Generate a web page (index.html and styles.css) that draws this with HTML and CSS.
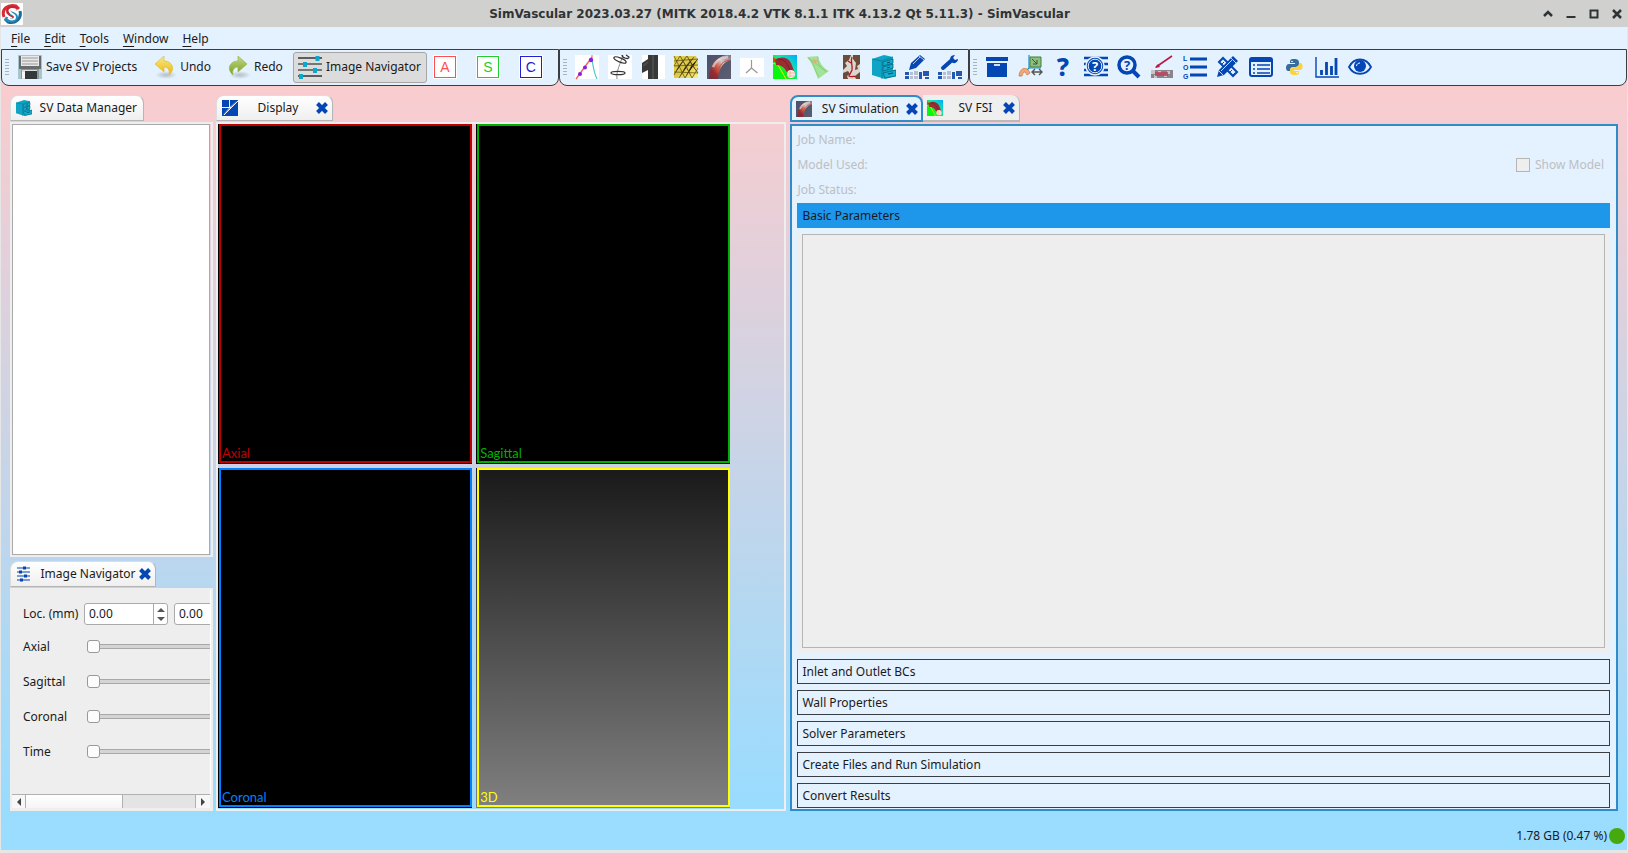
FILE: index.html
```html
<!DOCTYPE html>
<html lang="en">
<head>
<meta charset="utf-8">
<title>SimVascular</title>
<link rel="stylesheet" href="styles.css">
</head>
<body>
<svg class="defs" aria-hidden="true">
  <defs>
    <linearGradient id="gSim" x1="0" y1="0" x2="1" y2="1"><stop offset="0" stop-color="#4c5068"/><stop offset="1" stop-color="#5c5e72"/></linearGradient>
    <linearGradient id="gVessel" x1="1" y1="0" x2="0" y2="1"><stop offset="0" stop-color="#85707c"/><stop offset=".35" stop-color="#d8c4c2"/><stop offset=".55" stop-color="#d0604a"/><stop offset=".75" stop-color="#982a32"/><stop offset="1" stop-color="#6a3040"/></linearGradient>
    <linearGradient id="gFsi" x1="1" y1="0" x2="0" y2="1"><stop offset="0" stop-color="#00a8ff"/><stop offset=".4" stop-color="#10e8b0"/><stop offset=".6" stop-color="#10f020"/><stop offset="1" stop-color="#00ff00"/></linearGradient>
    <linearGradient id="gUndo" x1="0" y1="0" x2="0" y2="1"><stop offset="0" stop-color="#fbe98a"/><stop offset="1" stop-color="#e9b808"/></linearGradient>
    <linearGradient id="gRedo" x1="0" y1="0" x2="0" y2="1"><stop offset="0" stop-color="#c6d988"/><stop offset="1" stop-color="#76a020"/></linearGradient>
    <radialGradient id="gShade"><stop offset="0" stop-color="#888" stop-opacity=".5"/><stop offset="1" stop-color="#888" stop-opacity="0"/></radialGradient>
    <linearGradient id="gMesh" x1="0" y1="0" x2="1" y2="1"><stop offset="0" stop-color="#e0cf50"/><stop offset=".5" stop-color="#dcc848"/><stop offset="1" stop-color="#fff07a"/></linearGradient>
  </defs>
  <symbol id="close" viewBox="0 0 12 12"><path d="M1.500 1.500l9 9M10.500 1.500l-9 9" stroke="#0346b4" stroke-width="4"/></symbol>
  <symbol id="cabinet" viewBox="0 0 24 24"><path d="M0 4L12 0l9 2v13l3 0v6l-11 3L0 20z" fill="#0fa3c6"/><path d="M0 4l10 2 11-4M10 6v18" stroke="#0b7e99" stroke-width=".8" fill="none"/><path d="M11 7l10-3v4l-10 3zM11 12l10-3v4l-10 3zM11 18l13-3v6l-11 2z" fill="#12aed0" stroke="#086880" stroke-width=".8"/><path d="M15 8l3-1M15 13l3-1M16 19l5-1" stroke="#04485a"/></symbol>
  <symbol id="sim" viewBox="0 0 24 24"><path d="M0 0h24v24H0z" fill="url(#gSim)"/><path d="M2 24C2 12 8 2 20 0h4v5C16 7 12 13 11 24z" fill="url(#gVessel)"/><path d="M6 12C8 6 13 3 21 2" stroke="#ddd5e0" stroke-width="2.500" fill="none" opacity=".7"/><path d="M11 17C12 10 16 6 23 5" stroke="#c05040" fill="none"/></symbol>
  <symbol id="fsi" viewBox="0 0 24 24"><path d="M0 0h24v24H0z" fill="url(#gFsi)"/><path d="M0 8l5 2 8 14" stroke="#f8f000" stroke-width="1" fill="none"/><path d="M0 2l4 3-4 3z" fill="#f04000"/><path d="M2 5C7 1 15 2 18 8l4 10-6 4C13 14 10 10 3 10z" fill="#9b2c34"/><path d="M5 5c6-2 9 3 13 12" stroke="#742028" fill="none"/><circle cx="18" cy="19" r="4" fill="#fbe9e0"/><path d="M14.500 18h7M15 21h6M17 16v6" stroke="#e8a0a0" stroke-width=".7"/></symbol>
  <symbol id="blocks" viewBox="0 0 24 24"><path d="M0 16h24v8H0z" fill="#eef3fb"/><path d="M0 17h4v3H0zM0 21h4v3H0zM14 17h3v7h-3zM18 16h6v5h-6zM20 22h4v2h-4z" fill="#2457b2"/><path d="M5 17h3v3H5zM5 21h3v3H5zM9 16h4v4H9zM9 21h4v3H9z" fill="#b5c0d4"/></symbol>
</svg>

<header class="titlebar">
  <svg class="logo" viewBox="0 0 22 22" role="img" aria-label="SimVascular"><path d="M0 0h22v22H0z" fill="#fff"/><path d="M3 14C0 6 7 1 15 3l3 3" stroke="#dd2a35" stroke-width="3" fill="none"/><path d="M19 8c2 8-5 13-12 11l-3-3" stroke="#176d9c" stroke-width="3" fill="none"/><path d="M16 6C9 3 5 7 8 10s6 2 6 5c0 2-5 3-9 1" stroke="#c22731" stroke-width="4" fill="none"/><path d="M9 10c4 1 8 3 5 6-2 2-6 2-10-1" stroke="#268dbb" stroke-width="4" fill="none"/><path d="M15 7C11 5 7 6 9 9s5 2 5 5-4 3-7 1" stroke="#fff" stroke-width="2" fill="none"/></svg>
  <h1>SimVascular 2023.03.27 (MITK 2018.4.2 VTK 8.1.1 ITK 4.13.2 Qt 5.11.3) - SimVascular</h1>
  <div class="winbtns">
    <button aria-label="Shade"><svg viewBox="0 0 10 10"><path d="M1 7l4-4 4 4" stroke="#2e3436" stroke-width="2.500" fill="none"/></svg></button>
    <button aria-label="Minimize"><svg viewBox="0 0 10 10"><path d="M.5 8h9" stroke="#2e3436" stroke-width="2"/></svg></button>
    <button aria-label="Maximize"><svg viewBox="0 0 10 10"><path d="M1.500 1.500h7v7h-7z" stroke="#2e3436" stroke-width="2" fill="none"/></svg></button>
    <button aria-label="Close"><svg viewBox="0 0 10 10"><path d="M1 1l8 8M9 1L1 9" stroke="#2e3436" stroke-width="2.500"/></svg></button>
  </div>
</header>

<div class="app">
  <nav class="menubar">
    <button><u>F</u>ile</button><button><u>E</u>dit</button><button><u>T</u>ools</button><button><u>W</u>indow</button><button><u>H</u>elp</button>
  </nav>

  <div class="toolbars">
    <div class="toolbar main-tools">
      <span class="grip"></span>
      <button class="tool save"><svg viewBox="0 0 24 24"><path d="M0 0h24v24H0z" fill="#a9c4cb"/><path d="M1 1h22v13H1z" fill="#676b6d"/><path d="M3 1h18v10H3z" fill="#e8e8e8"/><path d="M4 3h16M4 6h16M4 9h16" stroke="#999" stroke-width="1.200"/><path d="M3 14h18v10H3z" fill="#8b9698"/><path d="M4 15h15v9H4z" fill="#dfe2e2"/><path d="M7 16h12v8H7z" fill="#33383a"/><path d="M4 17h3v6H4z" fill="#f7f7f7"/></svg>Save SV Projects</button>
      <button class="tool undo"><svg viewBox="0 0 24 24"><ellipse cx="12" cy="20" rx="11" ry="4" fill="url(#gShade)"/><path d="M1 9l9-8v5c8 0 12 8 5 14 1-5-1-8-5-8v5z" fill="url(#gUndo)" stroke="#e0bd32" stroke-width=".7"/></svg>Undo</button>
      <button class="tool redo"><svg viewBox="0 0 24 24"><ellipse cx="12" cy="20" rx="11" ry="4" fill="url(#gShade)"/><path d="M19 9l-9-8v5C2 6-2 14 5 20c-1-5 1-8 5-8v5z" fill="url(#gRedo)" stroke="#9ab650" stroke-width=".7"/></svg>Redo</button>
      <button class="tool pressed" aria-pressed="true"><svg viewBox="0 0 24 24"><path d="M0 3h24M0 21h24" stroke="#333" stroke-width="1.400"/><path d="M0 9h24M0 15h24" stroke="#777" stroke-width="1.800"/><path d="M17.500 1h4v5h-4zM5 7h4v5H5zM15 13h4v5h-4zM1 19h4v5H1z" fill="#10a6cc"/></svg>Image Navigator</button>
      <button class="plane red">A</button><button class="plane green">S</button><button class="plane blue">C</button>
    </div>
    <div class="toolbar icons">
      <span class="grip"></span>
      <button aria-label="Paths"><svg viewBox="0 0 24 24"><path d="M0 0h24v24H0z" fill="#fff"/><path d="M1 24L17 2" stroke="#ff5a5a" stroke-width="1.300"/><path d="M17 4c1 8 2 14 5 20" stroke="#4cc8c8" stroke-width="1.200" fill="none"/><path d="M17 0v3" stroke="#ff5a5a"/><circle cx="5" cy="19" r="2" fill="#8c1bdc"/><circle cx="10" cy="12.500" r="2" fill="#8c1bdc"/><circle cx="16" cy="5" r="2.200" fill="#8c1bdc"/></svg></button>
      <button aria-label="Segmentations"><svg viewBox="0 0 24 24"><path d="M0 0h24v24H0z" fill="#fff"/><path d="M9 24c-1-8 3-14 6-24" stroke="#888" fill="none"/><g fill="none" stroke="#333" stroke-width="1.300"><ellipse cx="12" cy="5" rx="6.500" ry="2" transform="rotate(22 12 5)"/><ellipse cx="10" cy="18" rx="7" ry="1.700"/><path d="M14 0c0 3 7 5 7 2l-3-2"/></g></svg></button>
      <button aria-label="Models"><svg viewBox="0 0 24 24"><path d="M1 0h23v24H1z" fill="#fff"/><path d="M7 0h10v24H7v-9l-6 3V8l6-4z" fill="#383838"/><path d="M12 0v24M2 11l5-4" stroke="#4b4b4b" stroke-width="2"/></svg></button>
      <button aria-label="Meshes"><svg viewBox="0 0 24 24"><path d="M0 1h22l2 5v17H0z" fill="url(#gMesh)"/><path d="M0 6l24-2M0 11l24-1M0 17l24 1M0 1l5 10 6 12M6 1l6 10 6 12M13 1l5 9 6 8M6 1L0 11M13 1L5 11 0 20M20 2L12 11 5 23M24 4l-6 6-7 13M24 13l-6 10" stroke="#59490f" stroke-width=".7"/></svg></button>
      <button aria-label="Simulation"><svg><use href="#sim"/></svg></button>
      <button aria-label="ROM simulation"><svg viewBox="0 0 24 24"><path d="M0 3h24v19H0z" fill="#fff"/><path d="M11.500 5v8M11.500 13L6 18M11.500 13l6 5" stroke="#999" stroke-width="1.200" fill="none"/></svg></button>
      <button aria-label="FSI"><svg><use href="#fsi"/></svg></button>
      <button aria-label="Multiphysics"><svg viewBox="0 0 24 24"><path d="M1 2l11-1c1 6 5 12 11 15l-11 8C9 16 6 8 1 2z" fill="#a3e396"/><path d="M3 3c6 6 5 12 10 19M12 2c-1 7 3 11 9 15M2 3l18 13" stroke="#7ecb7b" stroke-width=".8" fill="none"/><path d="M6 4l5 1-1 5z" fill="#efa77a"/></svg></button>
      <button aria-label="Image processing"><svg viewBox="0 0 24 24"><path d="M4 0h17v24H4z" fill="#dcd5d0"/><path d="M4 0h8l-2 5-4 3 2 3-2 2-2 2zM14 0h7v9l-3 2 1 3-3 1 1-7-3-4zM4 18l5-2 2 3-3 2 1 3H4zM16 21l5-4v7h-4z" fill="#6b4c3a"/><path d="M13 2c-2 5 1 8 0 13l-3 6c3 2 5-1 7 1M12 8l-3-2" stroke="#b5151b" stroke-width="1.300" fill="none"/></svg></button>
      <button aria-label="Project data"><svg><use href="#cabinet"/></svg></button>
      <button aria-label="Edit plugin"><svg viewBox="0 0 24 24"><use href="#blocks" width="24" height="24"/><path d="M4 15l2-7L15 0l5 4-9 9z" fill="#0647b1"/><path d="M8 9l7-7M14 1l5 4" stroke="#dceaff" stroke-width=".8"/></svg></button>
      <button aria-label="Configure plugin"><svg viewBox="0 0 24 24"><use href="#blocks" width="24" height="24"/><path d="M5 13l9-8" stroke="#0647b1" stroke-width="4" stroke-linecap="round"/><path d="M17 0c-4 0-6 3-4 6 2 4 7 2 7-2l-3 1-2-2z" fill="#0647b1"/></svg></button>
    </div>
    <div class="toolbar icons last">
      <span class="grip"></span>
      <button aria-label="Archive"><svg viewBox="0 0 24 24"><path d="M1 2h22v4H1zM2 8h20v14H2z" fill="#0346b4"/><path d="M9 10h6" stroke="#e4f1ff" stroke-width="1.800"/></svg></button>
      <button aria-label="Image cropper"><svg viewBox="0 0 24 24"><path d="M12 2h11v10H12z" fill="#8cc07b" stroke="#427b3d"/><path d="M11 0v13h12M11 13l-4 4" stroke="#1b8ccb" stroke-width="1.200" fill="none"/><path d="M14 4l5 5m0-4v4h-4" stroke="#355" fill="none"/><path d="M1 21c1-9 8-10 11-3l-3 2c-2-5-4-3-5 1z" fill="#f4a777" stroke="#ca7646" stroke-width=".8"/><path d="M15 17h8M17 14l-3 3 3 3M21 14l3 3-3 3" stroke="#555" stroke-width="1.400" fill="none"/></svg></button>
      <button aria-label="Help"><svg viewBox="0 0 24 24"><text x="12" y="21" text-anchor="middle" font-size="25" font-weight="800" fill="#0346b4">?</text></svg></button>
      <button aria-label="Context help"><svg viewBox="0 0 24 24"><path d="M0 3h24M0 9h24M0 15h24M0 20h24" stroke="#0346b4" stroke-width="2.600"/><circle cx="11" cy="11" r="9" fill="#0346b4" stroke="#e4f1ff" stroke-width="1.500"/><circle cx="11" cy="11" r="6.800" fill="none" stroke="#e4f1ff"/><text x="11" y="16" text-anchor="middle" font-size="13" font-weight="700" fill="#fff">?</text></svg></button>
      <button aria-label="Search help"><svg viewBox="0 0 24 24"><circle cx="10" cy="10" r="8" fill="none" stroke="#0346b4" stroke-width="3.500"/><path d="M16 16l6 6" stroke="#0346b4" stroke-width="4"/><text x="10" y="15" text-anchor="middle" font-size="13" font-weight="700" fill="#0346b4">?</text></svg></button>
      <button aria-label="Measurement"><svg viewBox="0 0 24 24"><path d="M1 15h22v8H1z" fill="#8b8488"/><path d="M1 15h4v4H1zM8 16h3v2H8zM17 16h3v3h-3zM4 20h3v3H4zM14 20h3v2h-3z" fill="#c9c3c6"/><path d="M5 17h13v4H5z" fill="#bb3c5a" opacity=".75"/><path d="M22 1L6 12" stroke="#b51c43" stroke-width="1.600"/><path d="M5 13l3-4 2 3z" fill="#b51c43"/></svg></button>
      <button aria-label="Log"><svg viewBox="0 0 24 24"><text class="log" x="0" y="6">L</text><text class="log" x="0" y="15">O</text><text class="log" x="0" y="24">G</text><path d="M7 4h17M7 12h17M7 20h17" stroke="#0346b4" stroke-width="3"/></svg></button>
      <button aria-label="Tools"><svg viewBox="0 0 24 24"><path d="M3 7l4-4 14 14-4 4z" fill="#e4f1ff" stroke="#0346b4" stroke-width="2"/><path d="M6 9l2-2M9 12l2-2M14 17l2-2M17 20l2-2" stroke="#0346b4"/><path d="M1 22l2-7L17 1l5 5L8 20z" fill="#0346b4"/><path d="M5 16l11-11M15 3l5 5M3 16l4 4" stroke="#dceaff" stroke-width=".9"/></svg></button>
      <button aria-label="Properties"><svg viewBox="0 0 24 24"><rect x="1" y="3" width="22" height="18" rx="2" fill="#e4f1ff" stroke="#0346b4" stroke-width="2"/><path d="M1 4h22v3H1z" fill="#0346b4"/><path d="M4 10h2M8 10h13M4 14h2M8 14h13M4 18h2M8 18h13" stroke="#0346b4" stroke-width="1.500"/></svg></button>
      <button aria-label="Python console"><svg viewBox="0 0 24 24"><path d="M12 4c-4 0-4 1-4 4h5v1H7c-4 0-4 8 0 7h1c0-3 1-4 4-4 4 0 5-1 5-4 0-3-1-4-5-4z" fill="#366d9e"/><path d="M13 20c4 0 4-1 4-4h-5v-1h6c4 0 3-8 0-7h-1c0 3-1 4-4 4-4 0-5 1-5 4 0 3 1 4 5 4z" fill="#fbd33f"/><circle cx="10" cy="6.500" r=".8" fill="#fff"/><circle cx="15" cy="17.500" r=".8" fill="#fff"/></svg></button>
      <button aria-label="Statistics"><svg viewBox="0 0 24 24"><path d="M1 2v20h23" stroke="#0346b4" stroke-width="1.400" fill="none"/><path d="M6.500 20v-5M11.500 20V7M16.500 20v-9M21 20V3" stroke="#0346b4" stroke-width="2.800"/></svg></button>
      <button aria-label="Views"><svg viewBox="0 0 24 24"><path d="M1 12C6 2 18 2 23 12 18 21 6 21 1 12z" fill="#e4f1ff" stroke="#0346b4" stroke-width="1.800"/><circle cx="12" cy="11" r="6" fill="#0346b4"/><path d="M8.500 11c0-2 2-3 3.500-3" stroke="#fff" fill="none"/></svg></button>
    </div>
  </div>

  <main class="work">
    <div class="left">
      <section class="view data">
        <div class="tab"><svg><use href="#cabinet"/></svg><span>SV Data Manager</span></div>
        <div class="frame"><div class="tree"></div></div>
      </section>
      <section class="view navigator">
        <div class="tab"><svg viewBox="0 0 16 16"><path d="M1 2h13M1 6h13M1 10h13M1 14h13" stroke="#0346b4" stroke-width="1.200"/><path d="M7 .5h3v3H7zM3 4.500h3v3H3zM8 8.500h3v3H8zM4 12.500h3v3H4z" fill="#0346b4"/></svg><span>Image Navigator</span><button class="x" aria-label="Close Image Navigator"><svg><use href="#close"/></svg></button></div>
        <div class="frame navframe">
          <form class="navform">
            <div class="row loc"><label for="lx">Loc. (mm)</label>
              <span class="spin"><input id="lx" value="0.00"><span class="arrows"><button type="button" aria-label="Increase"></button><button type="button" class="down" aria-label="Decrease"></button></span></span>
              <span class="spin"><input aria-label="Location y" value="0.00"><span class="arrows"><button type="button" aria-label="Increase y"></button><button type="button" class="down" aria-label="Decrease y"></button></span></span>
            </div>
            <div class="row"><label for="ax">Axial</label><input id="ax" type="range" value="0"></div>
            <div class="row"><label for="sa">Sagittal</label><input id="sa" type="range" value="0"></div>
            <div class="row"><label for="co">Coronal</label><input id="co" type="range" value="0"></div>
            <div class="row"><label for="ti">Time</label><input id="ti" type="range" value="0"></div>
          </form>
          <div class="scroll"><button aria-label="Scroll left"></button><span class="thumb"></span><span class="trough"></span><button class="rt" aria-label="Scroll right"></button></div>
        </div>
      </section>
    </div>

    <section class="view display">
      <div class="tab"><svg viewBox="0 0 16 16"><path d="M0 0h7v7H0zM8 0h8L8 7zM0 8h7L0 16zM16 0v16H0z" fill="#0346b4"/><path d="M7.500 0v8M0 7.500h9M2 15L16 1" stroke="#f2f2f2"/></svg><span>Display</span><button class="x" aria-label="Close Display"><svg><use href="#close"/></svg></button></div>
      <div class="frame">
        <div class="quad">
          <div class="port axial"><span>Axial</span></div>
          <div class="port sagittal"><span>Sagittal</span></div>
          <div class="port coronal"><span>Coronal</span></div>
          <div class="port three"><span>3D</span></div>
        </div>
      </div>
    </section>

    <section class="view simulation">
      <div class="tabs">
        <div class="tab active"><svg><use href="#sim"/></svg><span>SV Simulation</span><button class="x" aria-label="Close SV Simulation"><svg><use href="#close"/></svg></button></div>
        <div class="tab idle"><svg><use href="#fsi"/></svg><span>SV FSI</span><button class="x" aria-label="Close SV FSI"><svg><use href="#close"/></svg></button></div>
      </div>
      <div class="frame simframe">
        <div class="info">Job Name:</div>
        <div class="info"><span>Model Used:</span><label><input type="checkbox" disabled>Show Model</label></div>
        <div class="info">Job Status:</div>
        <button class="fold open">Basic Parameters</button>
        <div class="page"><div></div></div>
        <button class="fold">Inlet and Outlet BCs</button>
        <button class="fold">Wall Properties</button>
        <button class="fold">Solver Parameters</button>
        <button class="fold">Create Files and Run Simulation</button>
        <button class="fold">Convert Results</button>
      </div>
    </section>
  </main>

  <footer class="status"><span>1.78 GB (0.47 %)</span><i></i></footer>
</div>
</body>
</html>
```
FILE: styles.css
```css
* { box-sizing: border-box; }
body { margin: 0; height: 100vh; display: flex; flex-direction: column; font: 12px/18px "Noto Sans", sans-serif; color: #1a1a1a; background: #e6e6e6; overflow: hidden; }
button, input { font: inherit; color: inherit; margin: 0; padding: 0; border: 0; background: none; }
svg { display: block; flex: none; }
.defs { position: absolute; width: 0; height: 0; }

.titlebar { display: flex; align-items: center; height: 27px; padding-left: 1px; background: #d0d0ce; }
.logo { width: 22px; height: 22px; }
.titlebar h1 { flex: 1; margin: 0; text-align: center; font: bold 12px/20px "DejaVu Sans", sans-serif; color: #2e3436; white-space: nowrap; }
.winbtns { display: flex; }
.winbtns button { width: 23px; height: 27px; display: grid; place-items: center; }
.winbtns svg { width: 10px; height: 10px; }

.app { flex: 1; min-height: 0; display: flex; flex-direction: column; margin: 0 1px 3px; background: linear-gradient(#fccccc, #f9cccf 8%, #9adcfe 94%, #99ddff); }
.menubar { display: flex; gap: 14px; height: 22px; padding: 2px 10px 0; background: #e4f1ff; }
.menubar u { text-underline-offset: 3px; }

.toolbars { display: flex; background: linear-gradient(#e4f1ff 50%, #f9cdd0 50%); }
.toolbar { display: flex; align-items: center; height: 37px; padding-bottom: 1px; border: 1px solid #3a3d42; border-radius: 0 0 8px 8px; background: #e4f1ff; }
.grip { flex: none; width: 4px; height: 17px; margin: 0 0 2px 3px; background: radial-gradient(circle, #a9b3bd 34%, transparent 40%) 0 0 / 2px 3px; }
.main-tools { width: 558px; flex: none; }
.tool { flex: none; display: flex; align-items: center; gap: 4px; height: 31px; white-space: nowrap; }
.tool svg { width: 24px; height: 24px; }
.save { margin-left: 9px; }
.undo { margin-left: 17px; gap: 2px; }
.redo { margin-left: 17px; gap: 2px; }
.pressed { width: 134px; margin: 0 7px 0 10px; padding-left: 4px; border: 1px solid #a6a6a6; border-radius: 3px; background: #dcdcdc; }
.plane { flex: none; width: 22px; height: 22px; margin-right: 21px; border: 1px solid; outline: 1px solid #fff; background: #fff; font: 14px/20px "Liberation Sans", sans-serif; }
.plane.red { color: #ff5050; }
.plane.green { color: #1fcf2a; }
.plane.blue { color: #2020d0; margin-right: 0; }
.icons { flex: none; width: 410px; }
.icons button { flex: none; width: 24px; height: 24px; margin-right: 9px; }
.icons .grip { margin-right: 8px; }
.icons svg { width: 24px; height: 24px; overflow: visible; }
.icons.last { flex: 1; }
.log { font: bold 7px "Liberation Sans", sans-serif; fill: #0346b4; }

.work { flex: 1; min-height: 0; display: grid; grid-template-columns: 203px minmax(0, 570fr) minmax(0, 828fr); column-gap: 3px; padding: 9px 9px 0; }
.simulation { margin-left: 1px; }
.left { display: flex; flex-direction: column; gap: 4px; min-height: 0; }
.view { display: flex; flex-direction: column; min-height: 0; }
.data { flex: 1; }
.tab { align-self: flex-start; display: flex; align-items: center; height: 26px; padding: 0 5px; margin-bottom: 1px; border: 1px solid #b5b5b5; border-top-color: #ddd; border-left-color: #ddd; border-radius: 8px 8px 0 0; background: linear-gradient(#fff, #efefef); white-space: nowrap; }
.tab > svg { width: 16px; height: 16px; }
.tab span { flex: 1; text-align: center; }
.x { flex: none; width: 12px; height: 12px; }
.x svg { width: 12px; height: 12px; overflow: visible; }
#close { overflow: visible; }
.data .tab { width: 134px; padding-right: 6px; }
.data .tab span { text-align: right; }
.navigator .tab { width: 146px; padding-right: 4px; }
.navigator .tab span { padding-left: 5px; }
.display .tab { width: 117px; padding-right: 4px; }
.display .tab span { padding-left: 2px; }
.frame { flex: 1; min-height: 0; border: 2px solid #eee; display: flex; flex-direction: column; }
.tree { flex: 1; margin-right: 1px; border: 1px solid #aaa; background: #fff; }

.navigator { height: 250px; }
.navframe { background: #eee; overflow: hidden; }
.navform { flex: 1; min-width: 0; padding: 6px 0 0 11px; overflow: hidden; border-right: 1px solid #fff; }
.row { display: flex; align-items: center; height: 35px; }
.row label { flex: none; width: 61px; margin-right: 3px; }
.row.loc { height: 36px; margin-bottom: -3px; }
.row.loc label { margin-right: 0; }
.spin { flex: none; display: flex; width: 84px; height: 22px; margin-right: 6px; border: 1px solid #aaa; border-radius: 3px; background: #fff; }
.spin input { width: 68px; padding-left: 4px; }
.arrows { display: flex; flex-direction: column; align-items: center; justify-content: center; gap: 5px; flex: 1; border-left: 1px solid #aaa; }
.arrows button { border: 4px solid transparent; border-top: 0; border-bottom: 4px solid #555; }
.arrows .down { transform: rotate(180deg); }
input[type=range] { appearance: none; flex: none; width: 300px; height: 14px; }
input[type=range]::-webkit-slider-runnable-track { height: 5px; border: 1px solid #a8a8a8; border-width: 1px 0; background: #d4d4d4; }
input[type=range]::-webkit-slider-thumb { appearance: none; width: 13px; height: 13px; margin-top: -5px; border: 1px solid #999; border-radius: 3px; background: #fcfcfc; }
.scroll { display: flex; height: 14px; margin: 0 1px 1px 0; border-top: 1px solid #b0b0b0; background: #f7f7f7; }
.scroll button { width: 14px; display: grid; place-items: center; border-right: 1px solid #b0b0b0; }
.scroll button::before { content: ""; border: 4px solid transparent; border-left: 0; border-right: 4px solid #444; }
.scroll .rt { border: 0; }
.scroll .rt::before { transform: rotate(180deg); }
.thumb { flex: 98; background: linear-gradient(#fff, #f5f5f5); }
.trough { flex: 73; border: 1px solid #b0b0b0; border-width: 0 1px; background: #e4e4e4; }

.quad { flex: 1; display: grid; grid-template-columns: 254fr 254fr 50fr; grid-template-rows: 1fr 1fr; gap: 4px; margin-bottom: 1px; background: linear-gradient(#cbd0e7, #cbd0e7) 0 50% / 512px 4px no-repeat; }
.port { position: relative; display: flex; align-items: flex-end; padding: 0 0 2px 2px; background: #000; font: 13px/18px Lato, sans-serif; }
.port::before { content: ""; position: absolute; inset: 0 0 1px 1px; border: 2px solid currentColor; }
.axial { color: #c00000; }
.sagittal { color: #00b000; grid-column: 2; }
.coronal { color: #0080ff; grid-column: 1; }
.three { color: #ffff00; background: linear-gradient(#191919, #808080); }
.port span { padding-left: 2px; }

.tabs { display: flex; }
.tabs .tab { height: 27px; margin-bottom: 2px; }
.tabs .active { width: 133px; padding: 0 3px 0 4px; border: 2px solid #2f8cc8; background: #e4f1ff; }
.tabs .idle { width: 97px; padding: 0 4px; border: 0; border-right: 1px solid #b5b5b5; border-bottom: 2px solid #b9b9b9; border-radius: 0 8px 0 0; background: #efefef; }
.tabs .active span { padding-left: 2px; }
.tabs .idle span { padding-left: 4px; }
.simframe { padding: 1px 6px 1px 5px; border-color: #2f8cc8; background: #e4f1ff; }
.info { display: flex; justify-content: space-between; align-items: center; height: 25px; flex: none; color: #bdbfc1; }
.info label { display: flex; align-items: center; gap: 5px; padding-right: 6px; }
.info input { appearance: none; width: 14px; height: 14px; border: 1px solid #b5b5b5; background: #eee; }
.fold { flex: none; height: 25px; margin-top: 6px; padding: 1px 0 0 4px; border: 1px solid #3a3d42; text-align: left; }
.fold.open { margin-top: 1px; border-color: #1e97ea; background: #1e97ea; }
.page { flex: 1; min-height: 0; display: flex; margin-top: 6px; padding: 0 5px 5px; background: #eee; }
.page div { flex: 1; border: 1px solid #b5b5b5; }

.status { display: flex; align-items: center; justify-content: flex-end; gap: 2px; height: 39px; padding: 10px 2px 0 0; }
.status i { width: 16px; height: 16px; border-radius: 50%; background: #44aa0e; }
```
